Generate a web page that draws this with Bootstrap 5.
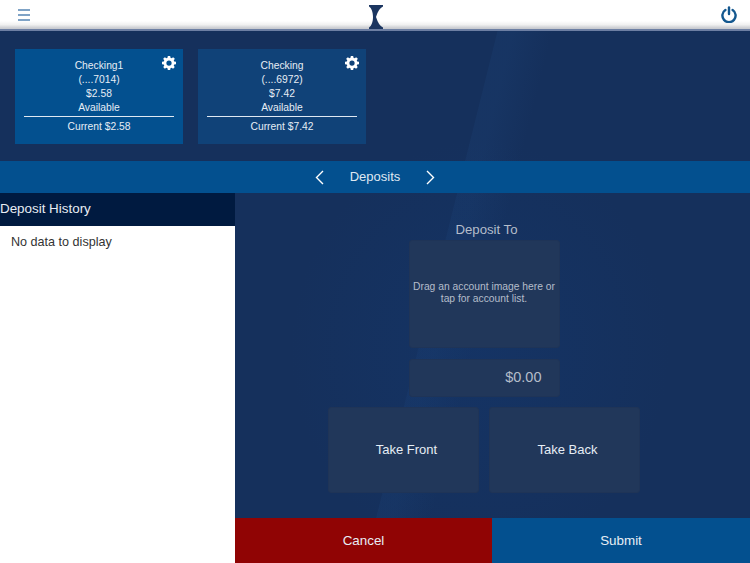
<!DOCTYPE html>
<html lang="en">
<head>
<meta charset="utf-8">
<title>Deposits</title>
<link rel="stylesheet" href="https://cdn.jsdelivr.net/npm/bootstrap@5.3.0/dist/css/bootstrap.min.css">
<style>
html, body { height: 100%; }
body { width: 750px; height: 563px; overflow: hidden; font-family: "Liberation Sans", Arial, sans-serif; color: #fff;
  background:
    radial-gradient(ellipse 190px 210px at 480px 350px, rgba(20,60,120,.3), transparent),
    linear-gradient(104deg, transparent 0 56.700%, rgba(30,70,125,.22) 56.800% 58.500%, transparent 63%),
    #15305c; }
.app-top { height: 31px; background: linear-gradient(#fff 0 72%, #f1f1f1 85%, #c9cbd0 97%); border-bottom: 2px solid #6d7fa3; padding: 0 13px 0 18px; }
.burger { width: 12px; display: flex; flex-direction: column; gap: 3px; }
.burger i { display: block; height: 2px; background: #7fa3c6; }
.logo-mark { top: 5px; left: 369px; }
.acct-band { height: 130px; padding: 18px 15px 0; gap: 15px; }
.acct { width: 168px; height: 95px; padding: 10px 9px 0; font-size: 10.300px; line-height: 14px; text-align: center; position: relative; color: #e6edf5; }
.acct-a { background: #03508f; }
.acct-b { background: #104278; }
.acct hr { margin: 1px 0 3px; border: 0; border-top: 1px solid #dfe8f2; opacity: 1; }
.gear { position: absolute; top: 7px; right: 7px; width: 14px; height: 14px; }
.bar { height: 32px; background: #03508f; gap: 26px; font-size: 13px; color: #dfe8f2; }
.main-row { height: 370px; }
.side { width: 235px; }
.side-head { height: 33px; background: #001a40; font-size: 13.400px; line-height: 31px; color: #e8edf3; }
.side-body { height: 337px; background: #fff; color: #333; font-size: 12.600px; padding: 8px 11px; line-height: 16px; }
.work { padding: 0 17px 0 0; }
.work-title { font-size: 13.200px; line-height: 16px; color: #b4bdca; margin: 29px 0 0 5px; text-align: center; width: 150px; }
.drop, .amount, .take { background: #21375a; border: 1px solid #1f3457; border-radius: 3px; }
.drop { width: 151px; height: 108px; margin-top: 2px; font-size: 10.300px; line-height: 12px; color: #b4bdca; text-align: center; padding: 0 3px 2px; }
.amount { width: 151px; height: 38px; margin-top: 11px; font-size: 14.500px; color: #b4bdca; padding: 0 17px; }
.takes { gap: 10px; margin-top: 10px; }
.take { width: 151px; height: 86px; font-size: 13px; color: #e6edf5; padding-left: 6px; }
.actions { height: 45px; }
.act { font-size: 13.400px; color: #e8eef5; padding-top: 1px; }
.act-cancel { width: 257px; background: #900404; }
.act-submit { width: 258px; background: #03508f; }
</style>
</head>
<body>
<header class="app-top d-flex align-items-center justify-content-between position-relative">
  <div class="burger"><i></i><i></i><i></i></div>
  <svg class="logo-mark position-absolute" width="14" height="24" viewBox="0 0 14 24" aria-label="logo">
    <path d="M0 0H14V1.500C11 3 9 6 7 12 9 18 11 21 14 22.500V24H0V22.500C2.500 21 4 17 4 12S2.500 3 0 1.500Z" fill="#1b3560"/>
  </svg>
  <svg width="16" height="17" viewBox="0 0 16 17" fill="none" stroke="#14588f" stroke-width="2.400" stroke-linecap="round" aria-label="power">
    <path d="M8 1.500V8"/><path d="M4.400 4A6.600 6.600 0 1 0 11.600 4"/>
  </svg>
</header>

<section class="acct-band d-flex">
  <div class="acct acct-a">
    <svg class="gear" viewBox="0 0 24 24" fill="#fff"><path fill-rule="evenodd" d="M10 1h4l.6 3.100 1.900.8L19.100 3 22 5.900l-1.900 2.600.8 1.900L24 11v4l-3.100.6-.8 1.900L21.900 20l-2.900 2.900-2.600-1.900-1.900.8L14 25h-4l-.6-3.200-1.900-.8L4.900 22.900 2 20l1.900-2.500-.8-1.900L0 15v-4l3.100-.6.8-1.900L2 5.900 4.900 3l2.600 1.900 1.900-.8zM12 8.500a4.500 4.500 0 1 0 0 9 4.500 4.500 0 0 0 0-9z" transform="translate(0 -1)"/></svg>
    <div>Checking1</div><div>(....7014)</div><div>$2.58</div><div>Available</div>
    <hr>
    <div>Current $2.58</div>
  </div>
  <div class="acct acct-b">
    <svg class="gear" viewBox="0 0 24 24" fill="#fff"><path fill-rule="evenodd" d="M10 1h4l.6 3.100 1.900.8L19.100 3 22 5.900l-1.900 2.600.8 1.900L24 11v4l-3.100.6-.8 1.900L21.900 20l-2.900 2.900-2.600-1.900-1.900.8L14 25h-4l-.6-3.200-1.900-.8L4.900 22.900 2 20l1.900-2.500-.8-1.900L0 15v-4l3.100-.6.8-1.900L2 5.900 4.900 3l2.600 1.900 1.900-.8zM12 8.500a4.500 4.500 0 1 0 0 9 4.500 4.500 0 0 0 0-9z" transform="translate(0 -1)"/></svg>
    <div>Checking</div><div>(....6972)</div><div>$7.42</div><div>Available</div>
    <hr>
    <div>Current $7.42</div>
  </div>
</section>

<nav class="bar d-flex align-items-center justify-content-center">
  <svg width="9" height="15" viewBox="0 0 9 15" fill="none" stroke="#fff" stroke-width="1.400"><path d="M8 1 1.500 7.500 8 14"/></svg>
  <span>Deposits</span>
  <svg width="9" height="15" viewBox="0 0 9 15" fill="none" stroke="#fff" stroke-width="1.400"><path d="M1 1 7.500 7.500 1 14"/></svg>
</nav>

<div class="main-row d-flex">
  <aside class="side">
    <div class="side-head">Deposit History</div>
    <div class="side-body">No data to display</div>
  </aside>
  <div class="flex-grow-1 d-flex flex-column">
    <div class="work flex-grow-1 d-flex flex-column align-items-center">
      <div class="work-title">Deposit To</div>
      <div class="drop d-flex align-items-center justify-content-center">Drag an account image here or tap for account list.</div>
      <div class="amount d-flex align-items-center justify-content-end">$0.00</div>
      <div class="takes d-flex">
        <div class="take d-flex align-items-center justify-content-center">Take Front</div>
        <div class="take d-flex align-items-center justify-content-center">Take Back</div>
      </div>
    </div>
    <div class="actions d-flex">
      <div class="act act-cancel d-flex align-items-center justify-content-center">Cancel</div>
      <div class="act act-submit d-flex align-items-center justify-content-center">Submit</div>
    </div>
  </div>
</div>
<script src="https://cdn.jsdelivr.net/npm/bootstrap@5.3.0/dist/js/bootstrap.bundle.min.js"></script>
</body>
</html>
